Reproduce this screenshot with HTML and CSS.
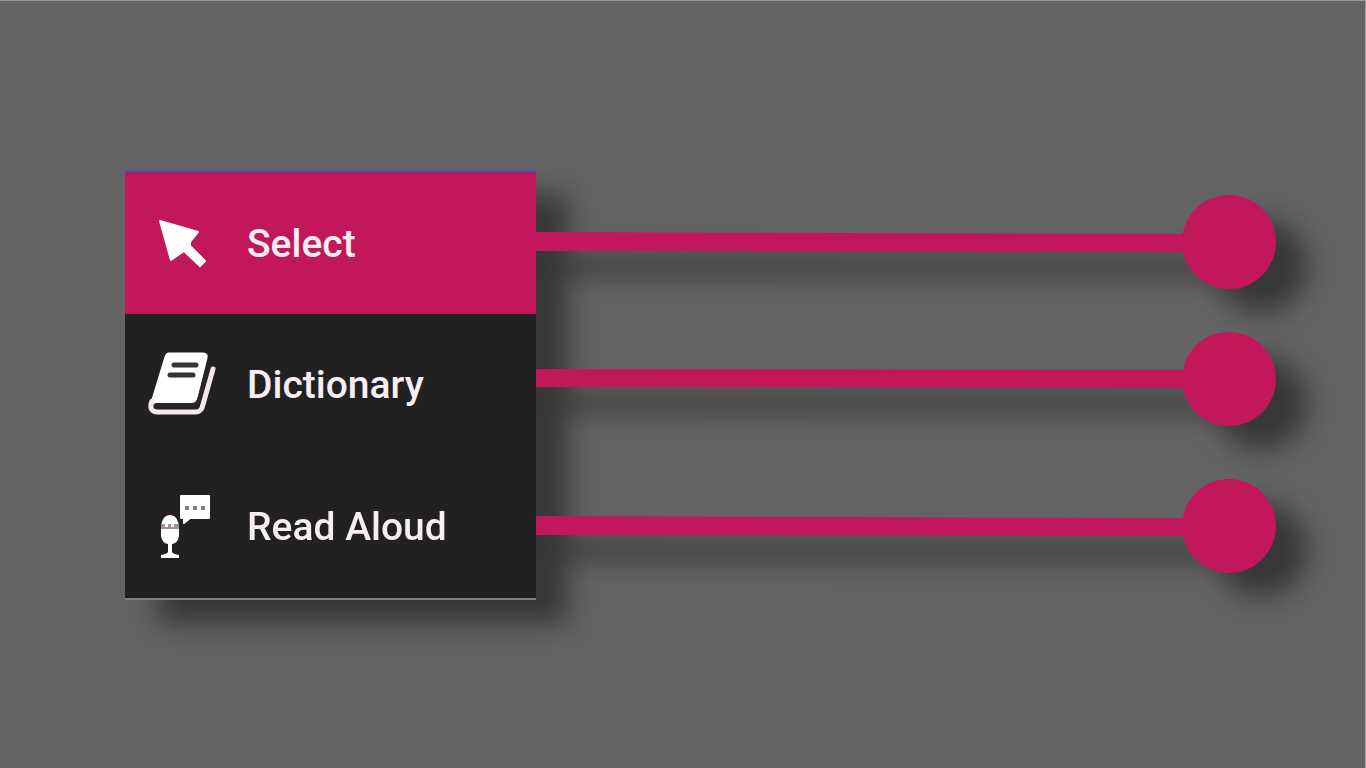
FILE: index.html
```html
<!DOCTYPE html>
<html lang="en">
<head>
<meta charset="utf-8">
<title>Menu tools</title>
<link rel="stylesheet" href="styles.css">
</head>
<body>
<main class="stage">
  <div class="diagram">
    <nav class="menu" aria-label="Tools">
      <button class="item item-active" type="button">
        <svg class="icon" viewBox="0 0 70 70" aria-hidden="true">
          <path fill="#fff" stroke="#fff" stroke-width="2" stroke-linejoin="round" d="M13 12 51 23 43 33 43 37 58 52 53 57 37 42 24 51Z"/>
        </svg>
        <span>Select</span>
      </button>
      <button class="item" type="button">
        <svg class="icon" viewBox="0 0 70 70" aria-hidden="true">
          <path fill="#fff" stroke="#fff" stroke-width="3" stroke-linejoin="round" d="M22 4H56Q60 4 59 8L49 48Q48 52 44 53H5L19 7Q20 4 22 4Z"/>
          <path fill="none" stroke="#f3e9ee" stroke-width="5" stroke-linecap="round" stroke-linejoin="round" d="M5 51Q1 61 10 62H49Q53 62 55 58L66 19"/>
          <path fill="none" stroke="#292627" stroke-width="4" stroke-linecap="round" d="M9 55H45Q50 55 52 50L62 16"/>
          <path fill="none" stroke="#383235" stroke-width="5" stroke-linecap="round" d="M27 15H49M23 25H46"/>
        </svg>
        <span>Dictionary</span>
      </button>
      <button class="item" type="button">
        <svg class="icon" viewBox="0 0 70 70" aria-hidden="true">
          <path fill="#fff" stroke="#fff" stroke-width="2" stroke-linejoin="round" d="M34 4H62V26H43L37 31V26H34Z"/>
          <path fill="#8b7c83" d="M38 14h4v4h-4zM46 14h4v4h-4zM54 14h4v4h-4z"/>
          <path fill="#fff" d="M15 30Q17 23 23 23T31 30L32 33H14ZM14 37H32V44Q31 51 25 52V60Q26 62 32 63V66H14V63Q20 62 21 60V52Q15 51 14 44Z"/>
          <path fill="#a58f99" d="M14 32H32V37H14Z"/>
          <path fill="#fff" d="M18 32H21V35H18ZM24 32H27V35H24Z"/>
        </svg>
        <span>Read Aloud</span>
      </button>
    </nav>
    <div class="connectors">
      <div class="connector">
        <svg class="line" viewBox="0 0 660 20" preserveAspectRatio="none" aria-hidden="true"><path fill="#c2185b" d="M0 0 660 2V20L0 19Z"/></svg>
        <span class="dot"></span>
      </div>
      <div class="connector">
        <svg class="line" viewBox="0 0 660 20" preserveAspectRatio="none" aria-hidden="true"><path fill="#c2185b" d="M0 0 660 1V19L0 18Z"/></svg>
        <span class="dot"></span>
      </div>
      <div class="connector connector-last">
        <svg class="line" viewBox="0 0 660 20" preserveAspectRatio="none" aria-hidden="true"><path fill="#c2185b" d="M0 0 660 2V20L0 19Z"/></svg>
        <span class="dot"></span>
      </div>
    </div>
  </div>
</main>
</body>
</html>
```
FILE: styles.css
```css
* {
  box-sizing: border-box;
}

body {
  margin: 0;
  background: #646464;
  font-family: Roboto, "Liberation Sans", sans-serif;
}

.stage {
  min-height: 100vh;
  padding: 169px 89px 40px 125px;
  border-top: 1px solid #999;
  border-right: 1px solid #999;
}

.diagram {
  display: flex;
  align-items: flex-start;
  filter: drop-shadow(32px 24px 14px rgba(0, 0, 0, 0.45));
}

.menu {
  flex: 0 1 411px;
  min-width: 340px;
  background: #212121;
  border-top: 2px solid #4459b5;
  border-bottom: 2px solid #808080;
}

.item {
  display: flex;
  align-items: center;
  gap: 30px;
  width: 100%;
  height: 142px;
  padding: 0 22px;
  border: 0;
  background: transparent;
  color: #f6eef2;
  font-family: inherit;
  font-size: 39px;
  font-weight: 500;
  line-height: 48px;
  text-align: left;
  cursor: pointer;
}

.item-active {
  border-top: 2px solid #ad1d58;
  background: #c2185b;
}

.icon {
  flex: none;
  width: 70px;
  height: 70px;
}

.connectors {
  flex: 1;
  min-width: 0;
  display: flex;
  flex-direction: column;
  gap: 43px;
  padding-top: 25px;
}

.connector {
  display: flex;
  align-items: center;
}

.connector-last {
  margin-top: 10px;
}

.line {
  flex: 1;
  min-width: 0;
  height: 20px;
  margin-right: -12px;
}

.dot {
  flex: none;
  width: 94px;
  height: 94px;
  border-radius: 50%;
  background: #c2185b;
}
```
